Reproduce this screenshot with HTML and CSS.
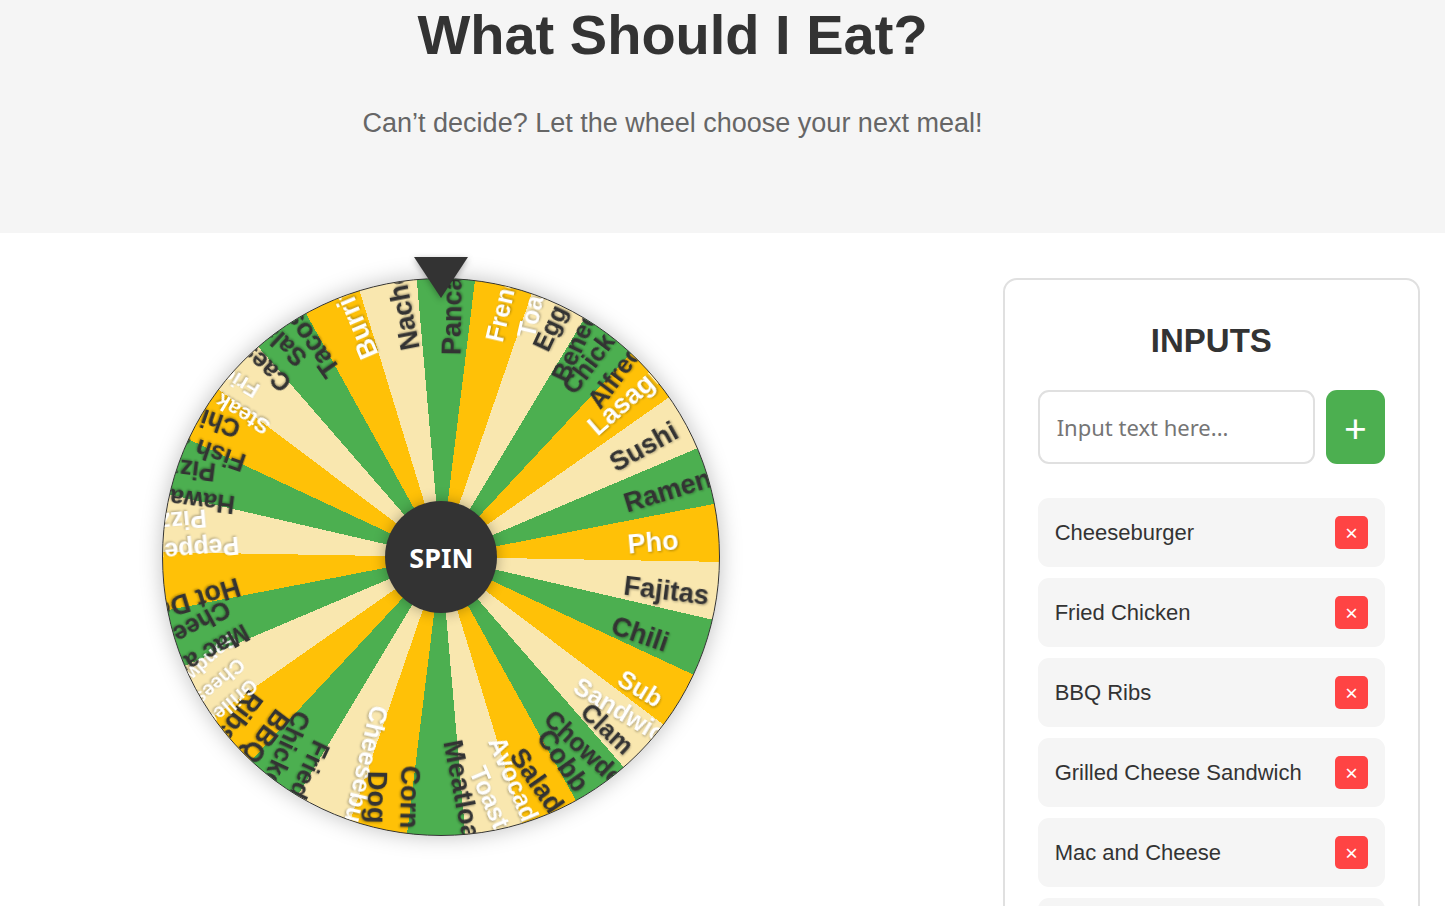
FILE: index.html
```html
<!DOCTYPE html>
<html lang="en">
<head>
<meta charset="utf-8">
<meta name="viewport" content="width=device-width, initial-scale=1">
<title>What Should I Eat?</title>
<link rel="stylesheet" href="styles.css">
</head>
<body>
<header class="hero">
  <h1 class="hero-title">What Should I Eat?</h1>
  <p class="hero-text">Can’t decide? Let the wheel choose your next meal!</p>
</header>
<main class="content">
  <section class="wheel-area" aria-label="Meal wheel">
    <div class="wheel-box">
      <div class="wheel">
        <svg class="labels" viewBox="-278 -278 556 556" aria-hidden="true">
          <g class="label small light" transform="rotate(103)"><text x="159" y="35">Cheeseburger</text></g>
          <g class="label small" transform="rotate(115)"><text x="218" y="38">Fried</text><text x="199" y="68">Chicken</text></g>
          <g class="label" transform="rotate(127)"><text x="219" y="41">BBQ</text><text x="220" y="74">Ribs</text></g>
          <g class="label tiny light" transform="rotate(139)"><text x="223" y="34">Grilled</text><text x="219" y="58">Cheese</text><text x="208" y="82">Sandwich</text></g>
          <g class="label small" transform="rotate(151)"><text x="205" y="38">Mac and</text><text x="210" y="68">Cheese</text></g>
          <g class="label" transform="rotate(163)"><text x="201" y="40">Hot Dog</text></g>
          <g class="label small light" transform="rotate(175)"><text x="200" y="38">Pepperoni</text><text x="230" y="68">Pizza</text></g>
          <g class="label small" transform="rotate(187)"><text x="211" y="35">Hawaiian</text><text x="234" y="65">Pizza</text></g>
          <g class="label small" transform="rotate(199)"><text x="216" y="33">Fish &amp;</text><text x="232" y="63">Chips</text></g>
          <g class="label mini light" transform="rotate(211)"><text x="214" y="28">Steak</text><text x="242" y="54">Fries</text></g>
          <g class="label small" transform="rotate(223)"><text x="228" y="28">Caesar</text><text x="234" y="57">Salad</text></g>
          <g class="label" transform="rotate(235)"><text x="211" y="26">Tacos</text></g>
          <g class="label light" transform="rotate(247)"><text x="211" y="22">Burrito</text></g>
          <g class="label" transform="rotate(259)"><text x="209" y="19">Nachos</text></g>
          <g class="label" transform="rotate(271)"><text x="202" y="16">Pancakes</text></g>
          <g class="label small light" transform="rotate(283)"><text x="222" y="12">French</text><text x="233" y="42">Toast</text></g>
          <g class="label small" transform="rotate(295)"><text x="230" y="11">Eggs</text><text x="210" y="41">Benedict</text></g>
          <g class="label small" transform="rotate(307)"><text x="209" y="10">Chicken</text><text x="213" y="39">Alfredo</text></g>
          <g class="label light" transform="rotate(319)"><text x="197" y="12">Lasagna</text></g>
          <g class="label" transform="rotate(331)"><text x="194" y="11">Sushi</text></g>
          <g class="label" transform="rotate(343)"><text x="191" y="12">Ramen</text></g>
          <g class="label light" transform="rotate(355)"><text x="187" y="13">Pho</text></g>
          <g class="label" transform="rotate(7)"><text x="185" y="15">Fajitas</text></g>
          <g class="label" transform="rotate(19)"><text x="184" y="17">Chili</text></g>
          <g class="label small light" transform="rotate(31)"><text x="215" y="19">Sub</text><text x="181" y="48">Sandwich</text></g>
          <g class="label small" transform="rotate(43)"><text x="208" y="21">Clam</text><text x="186" y="51">Chowder</text></g>
          <g class="label" transform="rotate(55)"><text x="202" y="26">Cobb</text><text x="202" y="59">Salad</text></g>
          <g class="label small light" transform="rotate(67)"><text x="188" y="29">Avocado</text><text x="208" y="58">Toast</text></g>
          <g class="label" transform="rotate(79)"><text x="182" y="33">Meatloaf</text></g>
          <g class="label" transform="rotate(91)"><text x="209" y="36">Corn</text><text x="215" y="69">Dog</text></g>
        </svg>
      </div>
      <svg class="pointer" viewBox="0 0 54 41" aria-hidden="true"><path d="M0 0H54L27 41Z" fill="#333"/></svg>
      <button class="spin" type="button">SPIN</button>
    </div>
  </section>
  <aside class="panel">
    <h2 class="panel-title">INPUTS</h2>
    <form class="add-form">
      <input class="add-input" type="text" aria-label="Meal" placeholder="Input text here...">
      <button class="add-button" type="button" aria-label="Add">+</button>
    </form>
    <ul class="meals">
      <li class="meal"><span>Cheeseburger</span><button class="remove" type="button" aria-label="Remove Cheeseburger">×</button></li>
      <li class="meal"><span>Fried Chicken</span><button class="remove" type="button" aria-label="Remove Fried Chicken">×</button></li>
      <li class="meal"><span>BBQ Ribs</span><button class="remove" type="button" aria-label="Remove BBQ Ribs">×</button></li>
      <li class="meal"><span>Grilled Cheese Sandwich</span><button class="remove" type="button" aria-label="Remove Grilled Cheese Sandwich">×</button></li>
      <li class="meal"><span>Mac and Cheese</span><button class="remove" type="button" aria-label="Remove Mac and Cheese">×</button></li>
      <li class="meal"><span>Hot Dog</span><button class="remove" type="button" aria-label="Remove Hot Dog">×</button></li>
    </ul>
  </aside>
</main>
</body>
</html>
```
FILE: styles.css
```css
* {
  box-sizing: border-box;
}

body {
  margin: 0;
  height: 100vh;
  overflow: hidden;
  background: #fff;
  color: #333;
  font-family: "Liberation Sans", Arial, sans-serif;
}

.hero {
  padding: 2px 100px 92px 0;
  background: #f5f5f5;
  text-align: center;
}

.hero-title {
  margin: 0 0 38px;
  font-size: 56px;
  line-height: 66px;
}

.hero-text {
  margin: 0;
  color: #666;
  font-size: 27px;
  line-height: 35px;
}

.content {
  display: grid;
  grid-template-columns: minmax(0, 2fr) minmax(0, 1fr);
  gap: 144px;
  align-items: start;
  padding: 45px 25px 45px 24px;
}

.wheel-area {
  display: flex;
  justify-content: center;
}

.wheel-box {
  position: relative;
  display: grid;
  place-items: center;
  width: 100%;
  max-width: 558px;
  aspect-ratio: 1;
}

.wheel {
  width: 100%;
  height: 100%;
  overflow: hidden;
  border: 1px solid #333;
  border-radius: 50%;
  background: repeating-conic-gradient(from -5deg, #4caf50 0 12deg, #ffc107 12deg 24deg, #f9e7af 24deg 36deg);
  box-shadow: 0 0 22px rgba(0, 0, 0, 0.25);
}

.labels {
  display: block;
  width: 100%;
  height: 100%;
}

.label {
  fill: #333;
  font-size: 27px;
  font-weight: 700;
  filter: drop-shadow(1px 1px 1px rgba(0, 0, 0, 0.3));
}

.small {
  font-size: 25px;
}

.mini {
  font-size: 22px;
}

.tiny {
  font-size: 20px;
}

.light {
  fill: #fff;
}

.pointer {
  position: absolute;
  top: -21px;
  left: 50%;
  width: 54px;
  margin-left: -27px;
  overflow: visible;
  filter: drop-shadow(0 2px 3px rgba(0, 0, 0, 0.3));
}

.spin {
  position: absolute;
  width: 112px;
  height: 112px;
  padding: 0;
  border: 0;
  border-radius: 50%;
  background: #333;
  box-shadow: 0 0 14px rgba(0, 0, 0, 0.3);
  color: #fff;
  font: 700 27px "Noto Sans", sans-serif;
}

.panel {
  padding: 41px 33px;
  border: 2px solid #e0e0e0;
  border-radius: 14px;
}

.panel-title {
  margin: 0 0 29px;
  font-size: 33px;
  line-height: 40px;
  text-align: center;
}

.add-form {
  display: flex;
  gap: 11px;
  margin-bottom: 34px;
}

.add-input {
  flex: 1;
  min-width: 0;
  height: 74px;
  padding: 0 17px;
  border: 2px solid #e0e0e0;
  border-radius: 11px;
  color: #333;
  font: 22px "Noto Sans", sans-serif;
}

.add-input::placeholder {
  color: #757575;
}

.add-button {
  width: 59px;
  padding: 0;
  border: 0;
  border-radius: 11px;
  background: #4caf50;
  color: #fff;
  font: 40px "Noto Sans", sans-serif;
}

.meals {
  display: flex;
  flex-direction: column;
  gap: 11px;
  margin: 0;
  padding: 0;
  list-style: none;
}

.meal {
  display: flex;
  align-items: center;
  justify-content: space-between;
  padding: 18px 17px;
  border-radius: 11px;
  background: #f5f5f5;
  font-size: 22px;
  line-height: 26px;
}

.remove {
  width: 33px;
  height: 33px;
  padding: 0;
  border: 0;
  border-radius: 5px;
  background: #f44;
  color: #fff;
  font: 22px/33px "Noto Sans", sans-serif;
}
```
